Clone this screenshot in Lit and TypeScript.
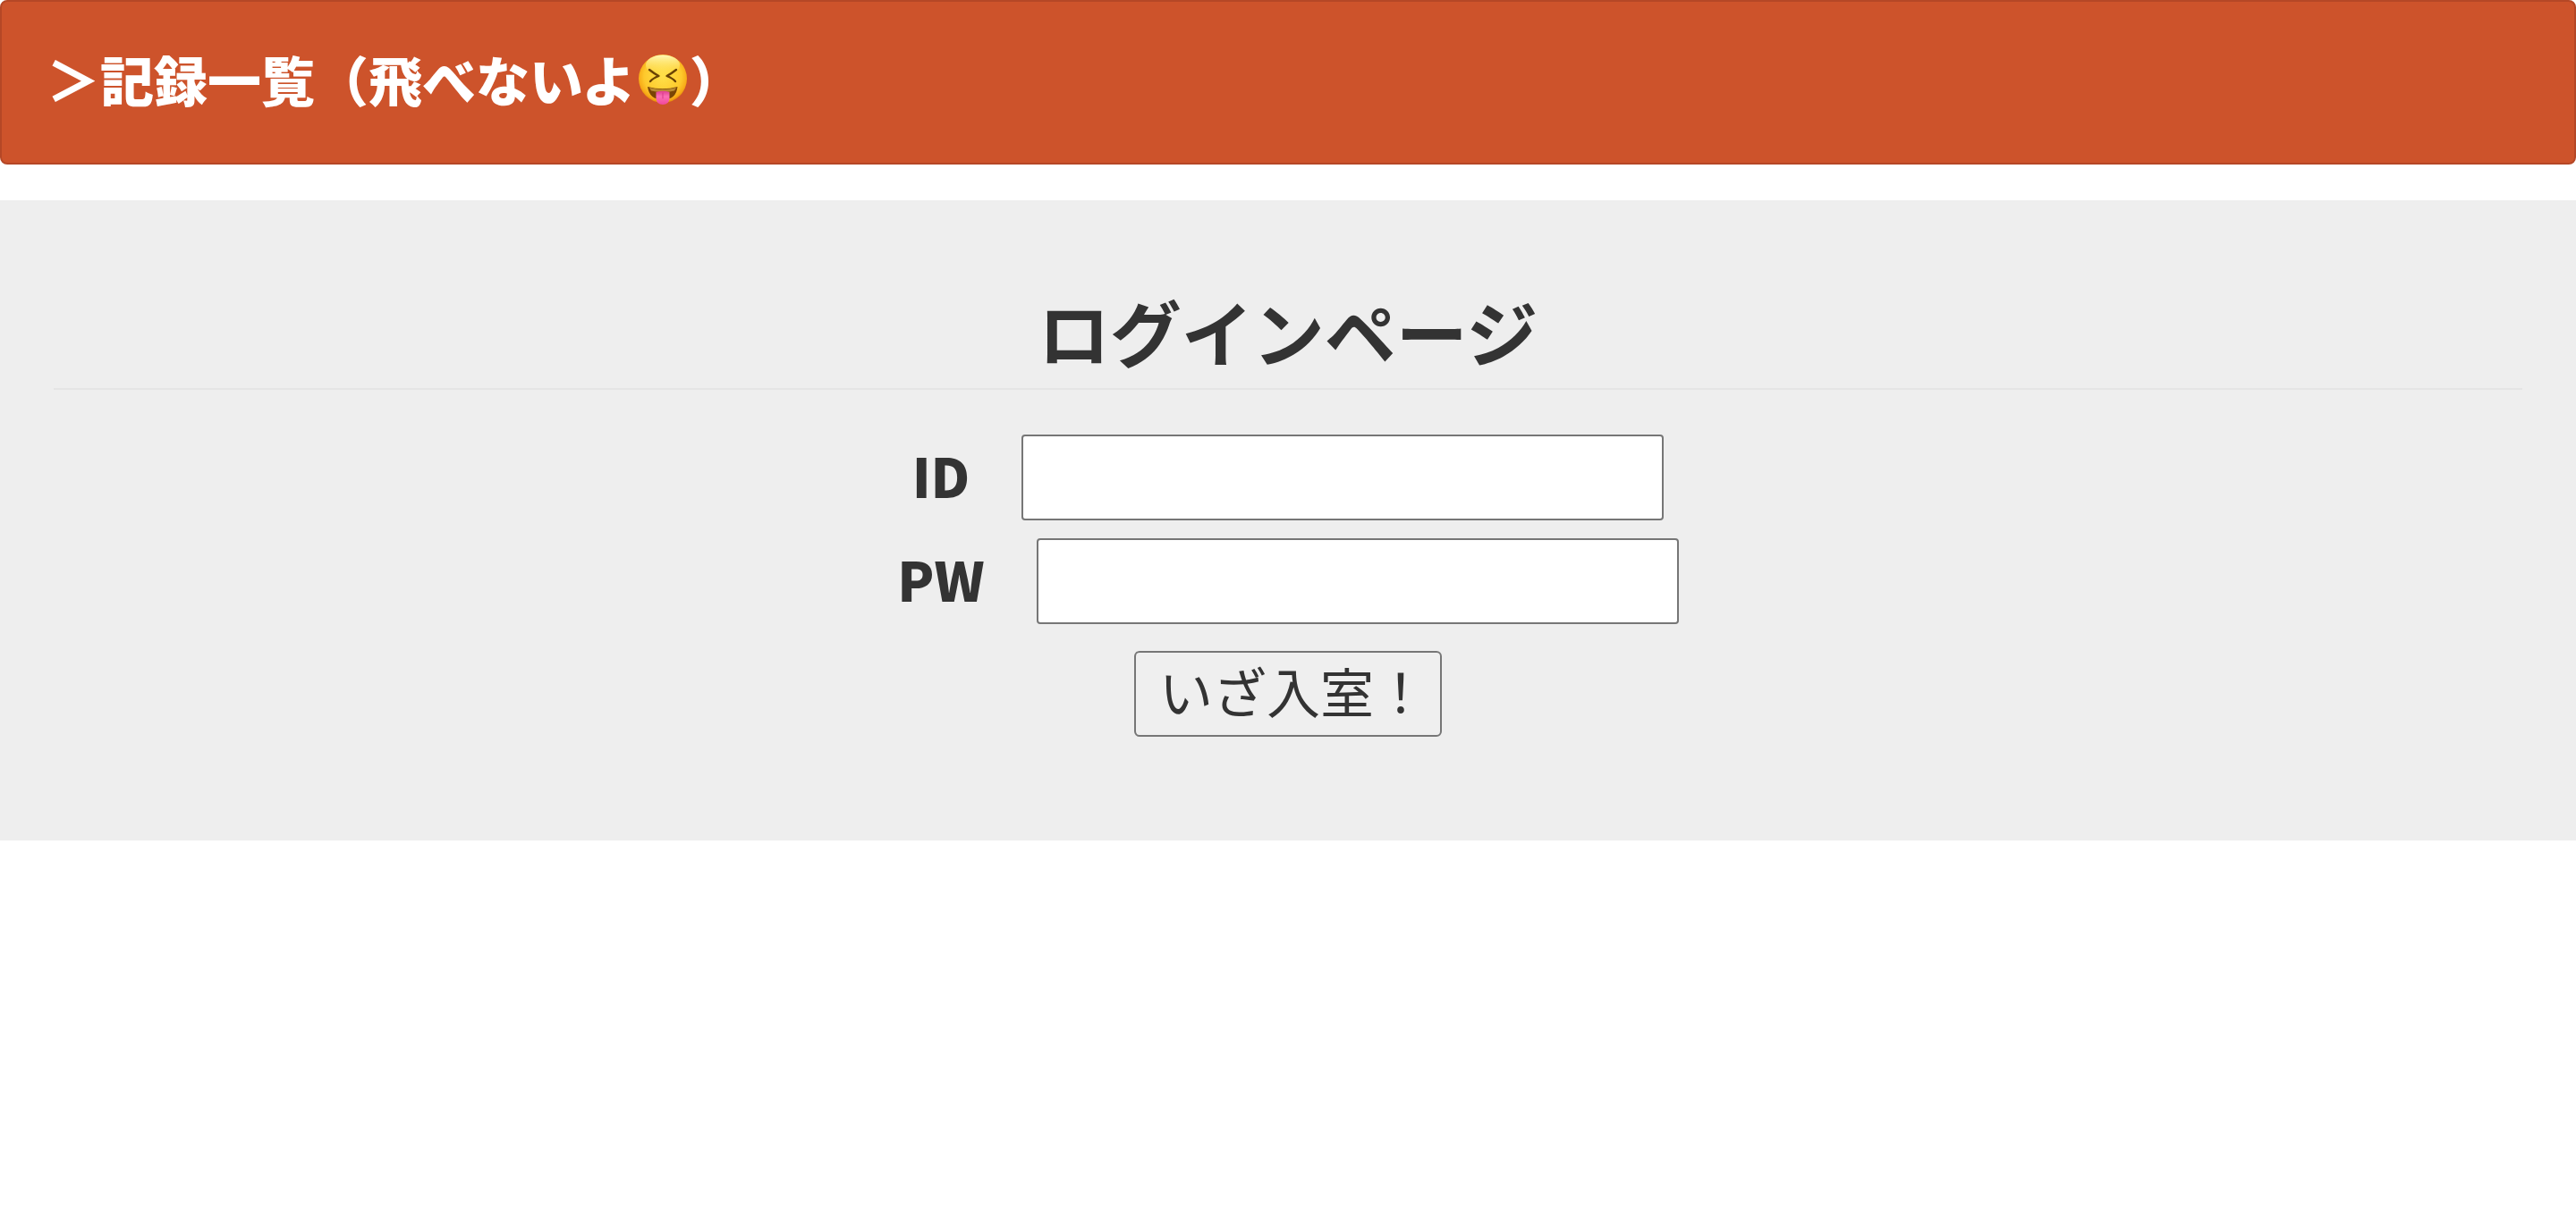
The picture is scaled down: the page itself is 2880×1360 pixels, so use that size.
import { LitElement, html, css, svg } from "lit";
import { customElement } from "lit/decorators.js";

@customElement("squint-face")
class SquintFace extends LitElement {
  static styles = css`
    :host {
      display: inline-block;
      width: 60px;
      height: 60px;
    }
    .face {
      display: block;
      width: 100%;
      height: 100%;
    }
  `;

  render() {
    return html`<svg class="face" viewBox="0 0 60 60" role="img" aria-label="😝">
      ${svg`
        <defs>
          <radialGradient id="skin" cx="0.5" cy="0.45" r="0.55">
            <stop offset="0" stop-color="#ffe04a"></stop>
            <stop offset="0.7" stop-color="#fec92c"></stop>
            <stop offset="0.9" stop-color="#f8ac18"></stop>
            <stop offset="1" stop-color="#e58d0c"></stop>
          </radialGradient>
          <linearGradient id="shine" x1="0" y1="0" x2="0" y2="1">
            <stop offset="0" stop-color="#fffbc0" stop-opacity="0.95"></stop>
            <stop offset="1" stop-color="#ffee60" stop-opacity="0"></stop>
          </linearGradient>
          <linearGradient id="tongue" x1="0" y1="0" x2="0" y2="1">
            <stop offset="0" stop-color="#e03f90"></stop>
            <stop offset="0.4" stop-color="#fb6fb6"></stop>
            <stop offset="1" stop-color="#f0489c"></stop>
          </linearGradient>
        </defs>
        <circle cx="30" cy="30" r="27" fill="url(#skin)"></circle>
        <ellipse cx="30" cy="15" rx="19" ry="11.5" fill="url(#shine)"></ellipse>
        <path d="M15 20Q20 24 25.500 27Q19 29.500 16 33" fill="none" stroke="#6a4204" stroke-width="2.400" stroke-linecap="round" stroke-linejoin="round"></path>
        <path d="M45 20Q40 24 34.500 27Q41 29.500 44 33" fill="none" stroke="#6a4204" stroke-width="2.400" stroke-linecap="round" stroke-linejoin="round"></path>
        <path d="M13 39Q30 43.500 46.500 39Q45 53.500 30 53.500Q15 53.500 13 39Z" fill="#7a4505"></path>
        <path d="M15 40Q30 44 45 40L43 43.500Q30 46.500 17 43.500Z" fill="#b98a34"></path>
        <path d="M22.500 45Q30 42.500 37.500 45V52Q37 59 30 59Q23 59 22.500 52Z" fill="url(#tongue)"></path>
        <path d="M30 46V52" stroke="#d93a88" stroke-width="1" stroke-linecap="round"></path>
      `}
    </svg>`;
  }
}

@customElement("app-root")
class AppRoot extends LitElement {
  static styles = css`
    :host {
      display: block;
      color: #333;
      font-family: "Noto Sans CJK JP", sans-serif;
      font-size: 60px;
      line-height: 84px;
    }
    .banner {
      box-sizing: border-box;
      display: flex;
      padding: 44px 50px 52px;
      border: 2px solid #b54726;
      border-radius: 8px;
      background: #cd532b;
      color: #fff;
      font-weight: 900;
    }
    .banner-link {
      display: flex;
      align-items: center;
      color: inherit;
      text-decoration: none;
    }
    .login {
      margin-top: 40px;
      padding: 90px 60px 116px;
      background: #eee;
    }
    .title {
      margin: 0 0 50px;
      padding-bottom: 10px;
      border-bottom: 2px solid #e5e5e5;
      font-size: 80px;
      line-height: 110px;
      font-weight: 700;
      text-align: center;
    }
    .form {
      display: flex;
      flex-direction: column;
      align-items: center;
      gap: 20px;
    }
    .field {
      display: flex;
      align-items: center;
      gap: 58px;
    }
    .label {
      padding-bottom: 6px;
      font-weight: 900;
    }
    .input {
      box-sizing: border-box;
      width: 718px;
      height: 96px;
      padding: 2px 4px;
      border: 2px solid #767676;
      border-radius: 4px;
      background: #fff;
      color: inherit;
      font: inherit;
      font-weight: 400;
    }
    .submit {
      box-sizing: border-box;
      height: 96px;
      margin-top: 10px;
      padding: 0 14px 8px 26px;
      border: 2px solid #767676;
      border-radius: 6px;
      background: #efefef;
      color: inherit;
      font: inherit;
    }
  `;

  render() {
    return html`
      <header class="banner">
        <a class="banner-link" href="#"><span>＞記録一覧（飛べないよ</span><squint-face></squint-face><span>）</span></a>
      </header>
      <main class="login">
        <h1 class="title">ログインページ</h1>
        <form class="form">
          <div class="field">
            <label class="label" for="user">ID</label>
            <input class="input" id="user" type="text" />
          </div>
          <div class="field">
            <label class="label" for="pass">PW</label>
            <input class="input" id="pass" type="password" />
          </div>
          <button class="submit" type="button">いざ入室！</button>
        </form>
      </main>
    `;
  }
}
